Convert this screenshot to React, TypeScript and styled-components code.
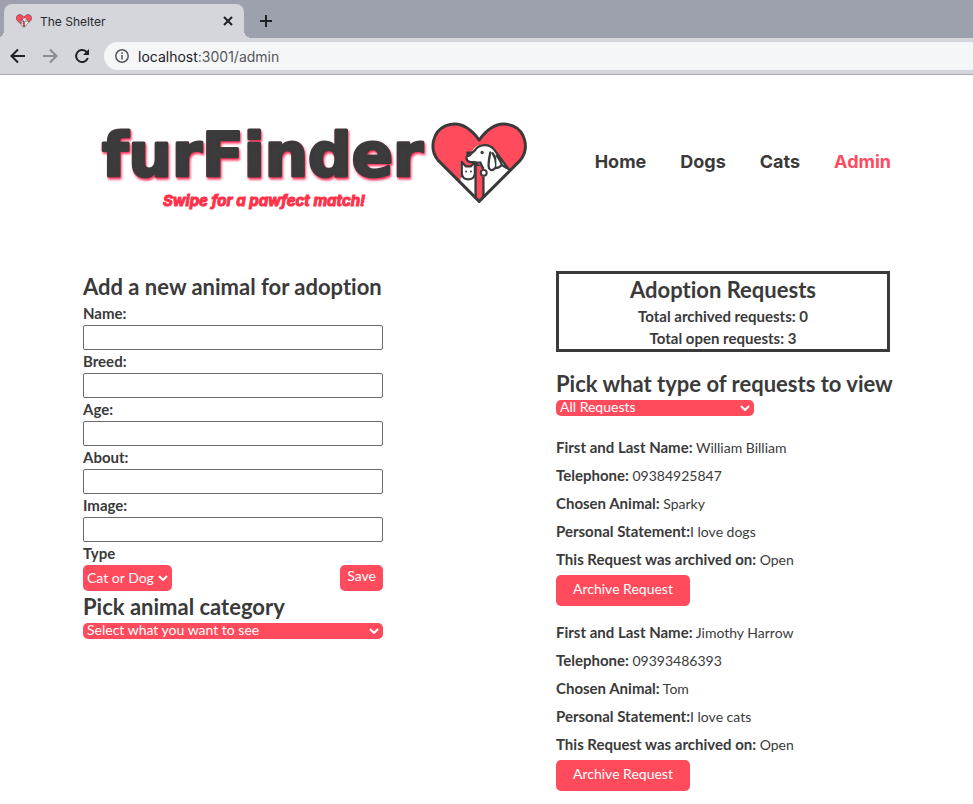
import React from "react";
import styled, { createGlobalStyle, css } from "styled-components";

const ink = "#3a3a3a";
const coral = "#ff4b5c";

const GlobalStyle = createGlobalStyle`
  *, *::before, *::after { box-sizing: border-box; }
  body {
    margin: 0;
    background: #fff;
    color: ${ink};
    font-family: Lato, sans-serif;
    font-size: 14px;
    font-variant-ligatures: none;
  }
  h1, h2, p { margin: 0; }
  b { font-size: 15px; font-weight: 700; line-height: 20px; }
  button { cursor: pointer; }
`;

/* Browser chrome */

const TabStrip = styled.div`
  display: flex;
  align-items: flex-end;
  height: 38px;
  padding-left: 4px;
  background: #9da1ae;
  font-family: Inter, sans-serif;
`;

const Tab = styled.div`
  position: relative;
  display: flex;
  align-items: center;
  gap: 8px;
  width: 240px;
  height: 34px;
  padding: 0 8px 0 12px;
  border-radius: 8px 8px 0 0;
  background: #d5d6db;
  color: #27282c;
  font-size: 12px;

  &::before, &::after {
    content: "";
    position: absolute;
    bottom: 0;
    width: 8px;
    height: 8px;
  }
  &::before { right: 100%; background: radial-gradient(circle at 0 0, transparent 8px, #d5d6db 8px); }
  &::after { left: 100%; background: radial-gradient(circle at 100% 0, transparent 8px, #d5d6db 8px); }
`;

const TabTitle = styled.span`
  flex: 1;
`;

const IconButton = styled.button<{ $muted?: boolean }>`
  display: flex;
  align-items: center;
  justify-content: center;
  padding: 0;
  border: 0;
  background: none;
  color: ${(p) => (p.$muted ? "#8b8c90" : "#1f2023")};
`;

const NewTab = styled(IconButton)`
  width: 28px;
  height: 34px;
  margin-left: 8px;
`;

const Toolbar = styled.div`
  display: flex;
  align-items: center;
  gap: 16px;
  height: 37px;
  padding-left: 10px;
  border-bottom: 1px solid #a9aab0;
  background: #d5d6db;
`;

const AddressBar = styled.div`
  display: flex;
  flex: 1;
  align-items: center;
  gap: 8px;
  height: 28px;
  margin-left: -2px;
  padding-left: 10px;
  border-radius: 14px 0 0 14px;
  background: #f5f6f8;
  color: #55565a;
  font: 14px Inter, sans-serif;
`;

const Host = styled.span`
  color: #1f2023;
`;

/* Page header */

const Header = styled.header`
  display: flex;
  align-items: center;
  justify-content: space-between;
  padding: 40px 82px 54px 96px;
`;

const Brand = styled.a`
  display: flex;
  align-items: flex-start;
`;

const Nav = styled.nav`
  display: flex;
  gap: 34px;
  margin-bottom: 8px;
`;

const NavLink = styled.a<{ $active?: boolean }>`
  color: ${(p) => (p.$active ? coral : ink)};
  font: 700 18px/24px Inter, sans-serif;
  text-decoration: none;
`;

/* Content */

const Main = styled.main`
  display: flex;
  align-items: flex-start;
  justify-content: space-between;
  gap: 32px;
  padding: 0 83px 13px;
`;

const AnimalColumn = styled.section`
  width: 300px;
`;

const RequestColumn = styled.section`
  width: 334px;
`;

const Heading = styled.h2`
  display: block;
  font-size: 22px;
  font-weight: 700;
  line-height: 31px;
  white-space: nowrap;
`;

const Label = styled.label`
  display: block;
  margin-bottom: 1px;
  font-size: 15px;
  font-weight: 700;
  line-height: 22px;
`;

const TextInput = styled.input`
  display: block;
  width: 100%;
  height: 25px;
  padding: 2px 4px;
  border: 1px solid #6b6b6b;
  border-radius: 2px;
  background: #fff;
  color: ${ink};
  font: 14px Lato, sans-serif;
`;

const filled = css`
  border: 0;
  border-radius: 5px;
  background: ${coral};
  color: #fff;
  font: 14px/16px Lato, sans-serif;
`;

const SelectFrame = styled.div<{ $width: string; $tall?: boolean }>`
  display: grid;
  align-items: center;
  width: ${(p) => p.$width};
  height: ${(p) => (p.$tall ? "26px" : "16px")};
  margin-top: ${(p) => (p.$tall ? "0" : "1px")};

  > * {
    grid-area: 1 / 1;
  }
  > svg {
    justify-self: end;
    margin-right: 4px;
    color: #fff;
    pointer-events: none;
  }
`;

const NativeSelect = styled.select<{ $tall?: boolean }>`
  ${filled}
  appearance: none;
  width: 100%;
  height: ${(p) => (p.$tall ? "26px" : "16px")};
  padding: 0 4px ${(p) => (p.$tall ? "0" : "2px")};
  line-height: ${(p) => (p.$tall ? "24px" : "14px")};
`;

const Button = styled.button<{ $large?: boolean }>`
  ${filled}
  height: ${(p) => (p.$large ? "31px" : "26px")};
  padding: ${(p) => (p.$large ? "0 17px 4px" : "0 7px 4px")};
`;

const FormActions = styled.div`
  display: flex;
  justify-content: space-between;
`;

const Summary = styled.div`
  margin-bottom: 16px;
  border: 3px solid ${ink};
  font-size: 15px;
  font-weight: 700;
  line-height: 22px;
  text-align: center;
`;

const Request = styled.article`
  display: flex;
  flex-direction: column;
  align-items: flex-start;
  margin-top: 13px;
  line-height: 28px;

  ${Button} {
    margin-top: 1px;
  }
`;

const RequestList = styled.div`
  padding-top: 5px;
`;

const HeartArt = ({ size }: { size: number }) => (
  <svg width={size} height={Math.round((size * 250) / 294)} viewBox="18 17 294 250" aria-hidden="true">
    <path
      d="M164 259 39 134C10 99 23 46 61 29c39-16 74 3 103 43 29-40 64-59 103-43 38 17 51 70 22 105Z"
      fill={coral}
    />
    <g fill="#fff" stroke={ink} strokeWidth="7" strokeLinejoin="round" strokeLinecap="round">
      <path d="M178 245v-62l-13-38-22-5c-10 0-15-7-14-15l20-29c13-15 43-13 56 0l36 50 13 19Z" stroke="none" />
      <path d="M108 190v-52l15 14h15l14-14v106l-46-46Z" stroke="none" />
      <path d="M111 183v-44l12 13h16l12-13v34c0 25-40 25-40 0Z" />
      <path
        d="M126 122c11-7 23-14 29-24 14-15 41-13 53 1l46 62M125 127c2 14 13 13 21 12 10 14 23 10 30 18"
        fill="none"
      />
      <path d="M198 110c-3 15-8 35-4 48 7 12 23 2 22-11 0-16-6-27-11-35" />
      <path d="M217 119c10 13 15 22 16 29-7 4-8 11-17 8M233 148l15 9" />
    </g>
    <path d="M157 151h19l-7 14c0 10 2 14 6 18v60l-11 11-8-9Z" fill={coral} />
    <path d="M153 140v105M177 184v61M150 141h18l8 20" fill="none" stroke={ink} strokeWidth="7" />
    <circle cx="178" cy="172" r="9" fill="#fff" stroke={ink} strokeWidth="6" />
    <path d="M125 107h17c1 14-7 19-17 14Z" fill={ink} />
    <g fill={ink}>
      <circle cx="173" cy="110" r="5" />
      <circle cx="124" cy="168" r="3" />
      <circle cx="139" cy="168" r="3" />
    </g>
    <path
      d="M164 259 39 134C10 99 23 46 61 29c39-16 74 3 103 43 29-40 64-59 103-43 38 17 51 70 22 105Z"
      fill="none"
      stroke={ink}
      strokeWidth="9"
      strokeLinejoin="round"
    />
  </svg>
);

const Wordmark = styled.svg`
  display: block;
  margin-right: 3px;
  overflow: visible;
`;

const HeartSlot = styled.span`
  display: flex;
  margin-top: 7px;
`;

const Logo = () => (
  <Brand href="/" aria-label="furFinder">
    <Wordmark width="332" height="102" viewBox="0 0 332 102">
      <defs>
        <filter id="glow" x="-5%" y="-10%" width="110%" height="125%">
          <feDropShadow dx="1" dy="2" stdDeviation="1" floodColor="#ff2f5d" />
        </filter>
      </defs>
      <text
        x="6"
        y="61"
        fontFamily="DejaVu Sans, sans-serif"
        fontWeight="700"
        fontSize="61"
        fill={ink}
        stroke={ink}
        strokeWidth="3"
        strokeLinejoin="round"
        filter="url(#glow)"
      >
        furFinder
      </text>
      <text
        x="67"
        y="91"
        fontFamily="Inter, sans-serif"
        fontWeight="700"
        fontSize="15"
        fontStyle="italic"
        fill="#ff3048"
        stroke="#ff3048"
        strokeWidth="1"
      >
        Swipe for a pawfect match!
      </text>
    </Wordmark>
    <HeartSlot>
      <HeartArt size={97} />
    </HeartSlot>
  </Brand>
);

const Stroke = ({ d, size = 16, width = 2 }: { d: string; size?: number; width?: number }) => (
  <svg width={size} height={size} viewBox="0 0 16 16" fill="none" stroke="currentColor" strokeWidth={width} aria-hidden="true">
    <path d={d} />
  </svg>
);

type SelectProps = { id: string; width: string; tall?: boolean; option: string };

const Select = ({ id, width, tall, option }: SelectProps) => (
  <SelectFrame $width={width} $tall={tall}>
    <NativeSelect id={id} $tall={tall}>
      <option>{option}</option>
    </NativeSelect>
    <svg width="10" height="6" viewBox="0 0 10 6" fill="none" stroke="currentColor" strokeWidth="2" aria-hidden="true">
      <path d="M1 1l4 4 4-4" />
    </svg>
  </SelectFrame>
);

const fields = ["Name", "Breed", "Age", "About", "Image"];

const requests = [
  { name: "William Billiam", phone: "09384925847", animal: "Sparky", statement: "I love dogs" },
  { name: "Jimothy Harrow", phone: "09393486393", animal: "Tom", statement: "I love cats" },
];

export default function App() {
  return (
    <>
      <GlobalStyle />
      <TabStrip>
        <Tab>
          <HeartArt size={16} />
          <TabTitle>The Shelter</TabTitle>
          <IconButton aria-label="Close tab">
            <Stroke d="M4 4l8 8M12 4l-8 8" width={2} />
          </IconButton>
        </Tab>
        <NewTab aria-label="New tab">
          <Stroke d="M8 2v12M2 8h12" />
        </NewTab>
      </TabStrip>
      <Toolbar>
        <IconButton aria-label="Back">
          <Stroke d="M15 8H2M8 1.5 1.5 8 8 14.5" />
        </IconButton>
        <IconButton aria-label="Forward" $muted>
          <Stroke d="M1 8h13M8 1.5 14.5 8 8 14.5" />
        </IconButton>
        <IconButton aria-label="Reload">
          <svg width="16" height="16" viewBox="0 0 16 16" aria-hidden="true">
            <path d="M13.8 10A6 6 0 1 1 12.3 3.7L14 5.4" fill="none" stroke="currentColor" strokeWidth="2" />
            <path d="M15 1v6H9Z" fill="currentColor" />
          </svg>
        </IconButton>
        <AddressBar>
          <svg width="16" height="16" viewBox="0 0 16 16" fill="none" stroke="currentColor" strokeWidth="1.5" aria-hidden="true">
            <circle cx="8" cy="8" r="6.2" />
            <path d="M8 7v4.5M8 4.3v1.6" />
          </svg>
          <span>
            <Host>localhost</Host>:3001/admin
          </span>
        </AddressBar>
      </Toolbar>

      <Header>
        <Logo />
        <Nav>
          <NavLink href="/">Home</NavLink>
          <NavLink href="/dogs">Dogs</NavLink>
          <NavLink href="/cats">Cats</NavLink>
          <NavLink href="/admin" $active>
            Admin
          </NavLink>
        </Nav>
      </Header>

      <Main>
        <AnimalColumn>
          <Heading>Add a new animal for adoption</Heading>
          <form>
            {fields.map((field) => (
              <React.Fragment key={field}>
                <Label htmlFor={field}>{field}:</Label>
                <TextInput id={field} name={field} />
              </React.Fragment>
            ))}
            <Label htmlFor="type">Type</Label>
            <FormActions>
              <Select id="type" width="89px" tall option="Cat or Dog" />
              <Button type="button">Save</Button>
            </FormActions>
          </form>
          <Heading as="label" htmlFor="category">
            Pick animal category
          </Heading>
          <Select id="category" width="100%" option="Select what you want to see" />
        </AnimalColumn>

        <RequestColumn>
          <Summary>
            <Heading>Adoption Requests</Heading>
            <p>Total archived requests: 0</p>
            <p>Total open requests: 3</p>
          </Summary>
          <Heading as="label" htmlFor="requests">
            Pick what type of requests to view
          </Heading>
          <Select id="requests" width="198px" option="All Requests" />
          <RequestList>
            {requests.map((r) => (
              <Request key={r.name}>
                <p>
                  <b>First and Last Name:</b> {r.name}
                </p>
                <p>
                  <b>Telephone:</b> {r.phone}
                </p>
                <p>
                  <b>Chosen Animal:</b> {r.animal}
                </p>
                <p>
                  <b>Personal Statement:</b>
                  {r.statement}
                </p>
                <p>
                  <b>This Request was archived on:</b> Open
                </p>
                <Button type="button" $large>
                  Archive Request
                </Button>
              </Request>
            ))}
          </RequestList>
        </RequestColumn>
      </Main>
    </>
  );
}
